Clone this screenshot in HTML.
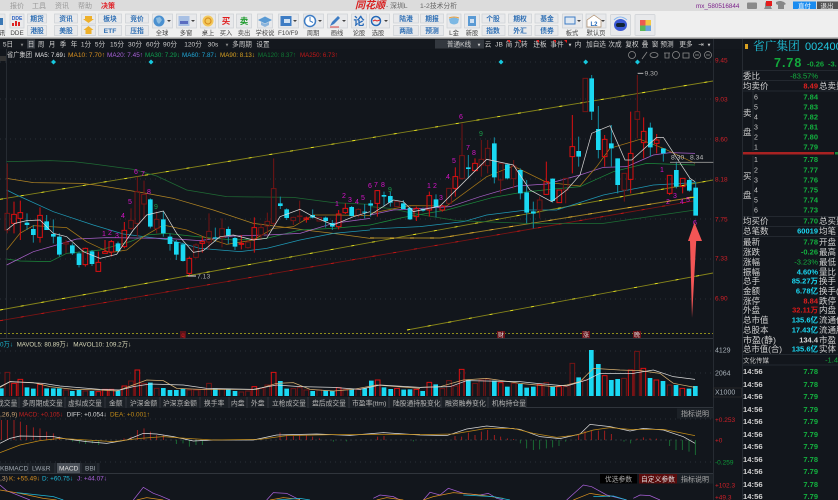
<!DOCTYPE html>
<html lang="zh"><head><meta charset="utf-8"><title>K</title>
<style>
html,body{margin:0;padding:0;background:#12161c;width:838px;height:500px;overflow:hidden}
svg{display:block;font-family:"Liberation Sans","Noto Sans CJK SC",sans-serif;filter:blur(.35px)}
.m{font-size:7px;fill:#999}
.b{font-size:6.8px;fill:#2f6fb4;text-anchor:middle;font-weight:bold}
.l{font-size:6.3px;fill:#444;text-anchor:middle}
.t{font-size:6.6px;fill:#d0d0d0;text-anchor:middle}
.a{font-size:6.5px;fill:#d02028}
.k{font-size:8.5px;fill:#d0d0d0}
.g{fill:#13b13f;font-size:7.5px;text-anchor:end;font-weight:bold}
.c{fill:#1ad8f2;font-size:7.5px;text-anchor:end;font-weight:bold}
.q{font-size:7px;fill:#c8c8c8}
.n{font-size:7px;fill:#d414c8;text-anchor:middle}
.bt{fill:#e8e9eb;stroke:#ccd0d4;stroke-width:.7}
.v{font-size:6.8px;fill:#b4b4b4}
</style></head>
<body>
<svg width="838" height="500" viewBox="0 0 838 500" xmlns="http://www.w3.org/2000/svg">
<rect width="838" height="500" fill="#12161c"/>
<!-- title bar -->
<rect width="838" height="11" fill="#dcdcdc"/>
<rect y="11" width="838" height="27" fill="#efefef"/>
<rect y="37.5" width="838" height="1.5" fill="#8a8a8a"/>
<g class="m"><text x="10" y="8">报价</text><text x="32" y="8">工具</text><text x="55" y="8">资讯</text><text x="78" y="8">帮助</text></g>
<text x="101" y="8" font-size="7" fill="#e0242a" font-weight="bold">决策</text>
<text x="355" y="8.500" font-size="10" fill="#d81e1e" font-weight="bold" font-style="italic">同花顺</text>
<text x="386" y="8" font-size="6.800" fill="#666">- 深圳L</text>
<text x="420" y="8" font-size="6.800" fill="#666">1-2技术分析</text>
<text x="696" y="8" font-size="6.300" fill="#7a1f8a">mx_580516844</text>
<rect x="747" y="2.500" width="10" height="6.500" rx="1" fill="#8a8a8a"/>
<path d="M764 9h8l-1-2v-3a3 3 0 0 0-6 0v3z" fill="#8a8a8a"/><rect x="766" y="1" width="6" height="5" fill="#e51b1b"/>
<path d="M776 2l3-1h2l3 1 2 2-2 1v4h-6V5l-2-1z" fill="#888"/>
<rect x="793" y="1.500" width="23" height="7.500" fill="#1a8cf0"/><text x="804.500" y="8" font-size="6.500" fill="#fff" text-anchor="middle">直付</text>
<rect x="817" y="1.500" width="21" height="7.500" fill="#555"/><text x="827" y="8" font-size="6.500" fill="#eee" text-anchor="middle">退出</text>
<!-- toolbar -->
<rect x="-4" y="14" width="9" height="19" fill="#e8e9eb" stroke="#ccd0d4" stroke-width=".6"/>
<rect x="-2" y="18" width="5" height="7" fill="#3a78b5"/><text x="2" y="35" class="l">讯</text>
<rect x="10" y="14" width="14" height="14" class="bt"/>
<text x="17" y="20" font-size="5" fill="#2a5fc0" text-anchor="middle" font-weight="bold">DDE</text>
<path d="M12 26v-3h2v3zM15 26v-5h2v5zM18 26v-4h2v4z" fill="#d22"/>
<text x="17" y="35" class="l">DDE</text>
<rect x="27.500" y="14" width="19" height="9" class="bt"/><text x="37" y="21" class="b">期货</text>
<rect x="27.500" y="25.500" width="19" height="10" class="bt"/><text x="37" y="33" class="b">港股</text>
<rect x="54.500" y="14" width="23" height="9" class="bt"/><text x="66" y="21" class="b">资讯</text>
<rect x="54.500" y="25.500" width="23" height="10" class="bt"/><text x="66" y="33" class="b">美股</text>
<rect x="81.500" y="14" width="14" height="10" class="bt"/><path d="M85 16h7v3h2l-5.500 4-5.500-4h2z" fill="#eeb02a"/>
<rect x="81.500" y="25.500" width="14" height="10" class="bt"/><path d="M88.500 26l5 4h-2v4h-6v-4h-2z" fill="#eeb02a"/>
<rect x="98.500" y="14" width="23" height="9" class="bt"/><text x="110" y="21" class="b">板块</text>
<rect x="98.500" y="25.500" width="23" height="10" class="bt"/><text x="110" y="33" class="b">ETF</text>
<rect x="125.500" y="14" width="23" height="9" class="bt"/><text x="137" y="21" class="b">竞价</text>
<rect x="125.500" y="25.500" width="23" height="10" class="bt"/><text x="137" y="33" class="b">压指</text>
<rect x="152.500" y="14" width="20" height="14" class="bt"/><circle cx="159" cy="21" r="5.500" fill="#4a90d0"/><path d="M156 18l4-1 2 3-3 4-2-2z" fill="#8dbce0"/><path d="M167 20h4l-2 2z" fill="#444"/><text x="162" y="35" class="l">全球</text>
<rect x="176.500" y="14" width="20" height="14" class="bt"/><rect x="178.500" y="16" width="11" height="10" fill="#a8c0e4"/><rect x="180" y="21" width="8" height="3" fill="#5a6cc0"/><path d="M191 20h4l-2 2z" fill="#444"/><text x="186" y="35" class="l">多窗</text>
<rect x="200.500" y="14" width="15" height="14" class="bt"/><circle cx="208" cy="21" r="5.500" fill="#f2c85c"/><circle cx="208" cy="21" r="3" fill="none" stroke="#d89020" stroke-width="1.200"/><text x="208" y="35" class="l">桌上</text>
<rect x="218.500" y="14" width="15" height="14" class="bt"/><text x="226" y="24" font-size="8.500" fill="#e01c1c" text-anchor="middle" font-weight="bold">买</text><text x="226" y="35" class="l">买入</text>
<rect x="236.500" y="14" width="15" height="14" class="bt"/><text x="244" y="24" font-size="8.500" fill="#1a9a2a" text-anchor="middle" font-weight="bold">卖</text><text x="244" y="35" class="l">卖出</text>
<rect x="257.500" y="14" width="15" height="14" class="bt"/><path d="M258 20l7-3.500 7 3.500-7 3.500z" fill="#5a9ad4"/><path d="M261 22v3l4 2 4-2v-3l-4 2z" fill="#8ab4dc"/><text x="265" y="35" class="l">学校说</text>
<rect x="278.500" y="14" width="20" height="14" class="bt"/><rect x="280.500" y="16" width="11" height="10" fill="#3d7cc4"/><rect x="284" y="19" width="6" height="4" fill="#cfe0f2"/><path d="M293 20h4l-2 2z" fill="#444"/><text x="288" y="35" class="l">F10/F9</text>
<rect x="303.500" y="14" width="20" height="14" class="bt"/><circle cx="310" cy="21" r="5.500" fill="#fff" stroke="#3d7cc4" stroke-width="1.500"/><path d="M310 17v4l3 1.500" stroke="#3d7cc4" fill="none"/><path d="M318 20h4l-2 2z" fill="#444"/><text x="313" y="35" class="l">周期</text>
<rect x="327.500" y="14" width="20" height="14" class="bt"/><path d="M330 26l2-4 6-6 2 2-6 6z" fill="#3d7cc4"/><path d="M330 27h9" stroke="#d44"/><path d="M342 20h4l-2 2z" fill="#444"/><text x="337" y="35" class="l">画线</text>
<rect x="351.500" y="14" width="15" height="14" class="bt"/><text x="359" y="25" font-size="11" fill="#2468b8" text-anchor="middle" font-weight="bold">论</text><text x="359" y="35" class="l">论股</text>
<rect x="369.500" y="14" width="20" height="14" class="bt"/><circle cx="376" cy="21" r="4.500" fill="none" stroke="#2468b8" stroke-width="1.500"/><path d="M373 21l2-1 2 1 3-1" stroke="#d22" fill="none"/><path d="M384 20h4l-2 2z" fill="#444"/><text x="378" y="35" class="l">选股</text>
<rect x="393.500" y="14" width="25" height="9" class="bt"/><text x="406" y="21" class="b">陆港</text>
<rect x="393.500" y="25.500" width="25" height="10" class="bt"/><text x="406" y="33" class="b">两融</text>
<rect x="420.500" y="14" width="23" height="9" class="bt"/><text x="432" y="21" class="b">期报</text>
<rect x="420.500" y="25.500" width="23" height="10" class="bt"/><text x="432" y="33" class="b">预测</text>
<rect x="447" y="14" width="14" height="14" class="bt"/><path d="M449 19q5-3 10 0l-1 4q-4 3-8 0z" fill="#7cb8e4"/><path d="M449 18q5-2 10 0" stroke="#e8a040" fill="none"/><text x="454" y="35" class="l">L金</text>
<rect x="464.500" y="14" width="15" height="14" class="bt"/><rect x="468" y="16" width="8" height="10" fill="#5a9ad4"/><rect x="470" y="19" width="4" height="4" fill="#cfe0f2"/><text x="472" y="35" class="l">新股</text>
<rect x="482" y="14" width="23" height="9" class="bt"/><text x="493" y="21" class="b">个股</text>
<rect x="482" y="25.500" width="23" height="10" class="bt"/><text x="493" y="33" class="b">指数</text>
<rect x="508.500" y="14" width="23" height="9" class="bt"/><text x="520" y="21" class="b">期权</text>
<rect x="508.500" y="25.500" width="23" height="10" class="bt"/><text x="520" y="33" class="b">外汇</text>
<rect x="535" y="14" width="23" height="9" class="bt"/><text x="547" y="21" class="b">基金</text>
<rect x="535" y="25.500" width="23" height="10" class="bt"/><text x="547" y="33" class="b">债券</text>
<rect x="562.500" y="14" width="20" height="14" class="bt"/><rect x="565" y="17" width="10" height="7" fill="#dfe8f2" stroke="#3d7cc4"/><path d="M577 20h4l-2 2z" fill="#444"/><text x="572" y="35" class="l">板式</text>
<rect x="586" y="14" width="20" height="14" class="bt"/><path d="M587 20l7-5 7 5v7h-14z" fill="#fff" stroke="#a86" stroke-width=".7"/><text x="594" y="26" font-size="6" fill="#2468b8" text-anchor="middle" font-weight="bold">L2</text><path d="M601 20h4l-2 2z" fill="#444"/><text x="596" y="35" class="l">默认页</text>
<rect x="610.500" y="14.500" width="20" height="21" rx="1" class="bt"/><ellipse cx="620.500" cy="25" rx="6.500" ry="6" fill="#3d5ad4"/><rect x="616" y="23" width="9" height="4" rx="2" fill="#123"/><path d="M614 20q6-6 13 0" stroke="#88b8f0" fill="none"/>
<rect x="635" y="14.500" width="20" height="21" rx="1" class="bt"/><rect x="640" y="20" width="5.500" height="5.500" fill="#ee5a52"/><rect x="645.500" y="20" width="5.500" height="5.500" fill="#f4c844"/><rect x="640" y="25.500" width="5.500" height="5.500" fill="#5cb858"/><rect x="645.500" y="25.500" width="5.500" height="5.500" fill="#6aa4dc"/>
<!-- tab strip -->
<rect y="39" width="742" height="10" fill="#14181e"/>
<rect x="27" y="39.500" width="8" height="9" fill="#3a3f46"/>
<rect x="435" y="39.500" width="49" height="9" fill="#33383f"/>
<g class="t">
<text x="8" y="46.500">5日</text><text x="22" y="46.500" font-size="5.500" fill="#888">▾</text><text x="31" y="46.500">日</text><text x="41" y="46.500">周</text><text x="52" y="46.500">月</text><text x="63" y="46.500">季</text><text x="74" y="46.500">年</text><text x="86" y="46.500">1分</text><text x="100" y="46.500">5分</text><text x="117" y="46.500">15分</text><text x="135" y="46.500">30分</text><text x="153" y="46.500">60分</text><text x="170" y="46.500">90分</text><text x="193" y="46.500">120分</text><text x="213" y="46.500">30s</text><text x="227" y="46.500" font-size="5.500" fill="#888">▾</text><text x="242" y="46.500">多周期</text><text x="263" y="46.500">设置</text>
<text x="459" y="46.500">普通K线</text><text x="479" y="46.500" font-size="5.500">▾</text><text x="488" y="46.500">云</text><text x="499" y="46.500">JB</text><text x="509" y="46.500">简</text><text x="521" y="46.500">九转</text><text x="540" y="46.500">连板</text><text x="557" y="46.500">事件</text><text x="570" y="46.500" font-size="5.500">▾</text><text x="578" y="46.500">内</text><text x="596" y="46.500">加自选</text><text x="615" y="46.500">次成</text><text x="632" y="46.500">复权</text><text x="645" y="46.500">叠</text><text x="655" y="46.500">窗</text><text x="667" y="46.500">预测</text><text x="686" y="46.500">更多</text><text x="701" y="46.500">⇥</text><text x="709" y="46.500" font-size="5.500">▾</text>
</g>
<path d="M507 40l3 0v3zM518 40l3 0v3zM536 40l3 0v3zM553 40l3 0v3zM564 40l3 0v3z" fill="#e02020"/>
<!-- MA legend -->
<g font-size="6.800" lengthAdjust="spacingAndGlyphs">
<text x="7" y="57" fill="#d0d0d0" textLength="25" lengthAdjust="spacingAndGlyphs">省广集团</text>
<text x="35" y="57" fill="#e8e8e8" textLength="31" lengthAdjust="spacingAndGlyphs">MA5: 7.69↓</text>
<text x="68" y="57" fill="#d89020" textLength="37" lengthAdjust="spacingAndGlyphs">MA10: 7.70↑</text>
<text x="107" y="57" fill="#a860d8" textLength="36" lengthAdjust="spacingAndGlyphs">MA20: 7.45↑</text>
<text x="145" y="57" fill="#0fa050" textLength="35" lengthAdjust="spacingAndGlyphs">MA30: 7.29↓</text>
<text x="182" y="57" fill="#20a8d8" textLength="35" lengthAdjust="spacingAndGlyphs">MA60: 7.87↓</text>
<text x="220" y="57" fill="#d8a020" textLength="35" lengthAdjust="spacingAndGlyphs">MA90: 8.13↓</text>
<text x="258" y="57" fill="#0f7a34" textLength="38" lengthAdjust="spacingAndGlyphs">MA120: 8.37↑</text>
<text x="300" y="57" fill="#c01818" textLength="38" lengthAdjust="spacingAndGlyphs">MA250: 6.73↑</text>
</g>
<rect x="0" y="56" width="6" height="5" fill="#333"/>
<!-- icons row -->
<g fill="none" stroke="#8c8c8c" stroke-width=".8">
<circle cx="632" cy="55" r="3.500"/><path d="M642 59l5-7"/><ellipse cx="654" cy="55" rx="4" ry="2.500"/><path d="M664 53h6M665 53v5h4v-5"/><circle cx="676" cy="55" r="3.500"/><rect x="683" y="53" width="6" height="5"/><circle cx="697" cy="55" r="3.500"/><path d="M695 55h4"/><circle cx="708" cy="55" r="3.500"/><path d="M706 55h4"/>
</g>
<!-- structure lines -->
<path d="M6.500 49V338M713.500 39V500M742.500 39V500" stroke="#262b32" stroke-width="1" fill="none"/>
<path d="M0 338.500H713M0 407.500H713M0 473.500H713" stroke="#30353c" stroke-width="1" fill="none"/>
<path d="M0 62H713M0 99H713M0 139H713M0 179H713M0 219H713M0 259H713M0 299H713M0 351H713M0 373H713M0 419H713M0 462H713" stroke="#343a42" stroke-width=".8" stroke-dasharray="1 4" fill="none"/>
<path d="M0 333.500H713" stroke="#b8b41c" stroke-width=".8" stroke-dasharray="2 2" fill="none"/>
<path d="M0 440H695" stroke="#3a4048" stroke-width=".8" stroke-dasharray="2 3" fill="none"/>
<!-- axis -->
<g class="a">
<text x="715" y="62.500">9.45</text><text x="715" y="101.500">9.03</text><text x="715" y="141.500">8.60</text><text x="715" y="181.500">8.18</text><text x="715" y="221.500">7.75</text><text x="715" y="260.500">7.33</text><text x="715" y="300.500">6.90</text>
<text x="715" y="422">+0.253</text><text x="715" y="442.500">+0</text><text x="715" y="487.500">+102.3</text><text x="715" y="499.500">+49.3</text>
</g>
<text x="715" y="464.500" font-size="6.500" fill="#0d9a38">-0.259</text>
<g font-size="7" fill="#a8b0b8"><text x="715" y="352.500">4129</text><text x="715" y="375.500">2064</text><text x="715" y="394.500">X1000</text></g>
<rect x="713.500" y="388" width="28" height="9" fill="none" stroke="#333" stroke-width=".6"/>
<!-- diamonds -->
<g fill="#16c8de"><path d="M53.500 59.500l2.500 2.500-2.500 2.500-2.500-2.500z"/><path d="M151 59.500l2.500 2.500-2.500 2.500-2.500-2.500z"/><path d="M501 59.500l2.500 2.500-2.500 2.500-2.500-2.500z"/><path d="M585.700 59.500l2.500 2.500-2.500 2.500-2.500-2.500z"/><path d="M637.500 59.500l2.500 2.500-2.500 2.500-2.500-2.500z"/></g>
<!-- channel lines -->
<g fill="none" stroke-width=".9">
<path d="M0 199.300L713 81M0 310L713 180M407 330L713 273" stroke="#86841a"/>
<path d="M0 199.300L713 81M0 310L713 180M407 330L713 273" stroke="#eeea20" stroke-dasharray="3 18"/>
<path d="M0 320.700L695 200.700" stroke="#7a1414"/>
<path d="M0 320.700L695 200.700" stroke="#cc1616" stroke-dasharray="3 18"/>
<path d="M370 238L440 238L695 197" stroke="#a08024"/>
<path d="M370 238L440 238L695 197" stroke="#eeb830" stroke-dasharray="4 16"/>
</g>
<!-- left half chart: zoom space -->
<g transform="translate(0 60) scale(.33333)" fill="none">
<polyline stroke-width="2.200" stroke="#1f6a34" points="20,305 150,302 220,305 280,312 400,328 470,348 560,390 680,410 880,412 1000,428 1110,433"/>
<polyline stroke-width="2.200" stroke="#b08424" points="20,355 100,368 245,370 300,377 440,400 520,415 640,450 760,490 880,505 930,512 1000,520 1110,535"/>
<polyline stroke-width="2.200" stroke="#1f98b4" points="20,390 50,405 160,455 280,495 370,522 510,540 600,565 720,575 800,565 900,540 1000,520 1110,510"/>
<polyline stroke-width="2.200" stroke="#1c8a3c" points="20,597 60,603 150,605 200,580 300,570 390,545 440,525 500,520 590,530 700,540 800,535 900,510 1000,505 1110,495"/>
<polyline stroke-width="2.200" stroke="#a860c8" points="20,615 100,575 180,552 230,537 320,533 500,535 600,542 700,528 800,525 900,520 1000,490 1110,475"/>
<polyline stroke-width="2.200" stroke="#a87818" points="20,570 60,520 100,497 200,503 260,545 330,578 380,570 430,530 490,495 560,510 610,530 680,553 760,540 820,505 880,500 940,465 1000,465 1110,467"/>
<path stroke-width="3" stroke="#dd1010" d="M42 425V463M42 490V520M35 463h14v27h-14zM61 422V458M61 475V540M54 458h14v17h-14zM120 442V466M120 532V548M113 466h14v66h-14zM256 563V565M256 614V620M249 565h14v49h-14zM295 575V607M288 607h14v27h-14zM315 540V575M308 575h14v5h-14zM334 540V545M334 576V590M327 545h14v31h-14zM373 486V511M373 560V565M366 511h14v49h-14zM568 590V595M568 640V650M561 595h14v45h-14zM607 530V545M607 550V578M600 545h14v5h-14zM724 525V550M724 553V568M717 550h14v3h-14zM763 472V503M763 538V578M756 503h14v35h-14zM919 470V474M919 478V488M912 474h14v4h-14zM1016 450V462M1016 500V508M1009 462h14v38h-14zM1036 430V445M1036 458V462M1029 445h14v13h-14z"/>
<path stroke-width="3" stroke="#741414" d="M22 310V460M22 510V520M15 460h14v50h-14zM198 540V548M198 552V580M191 548h14v4h-14zM393 445V481M393 505V510M386 481h14v24h-14zM412 350V395M412 490V530M405 395h14v95h-14zM432 362V403M432 432V478M425 403h14v29h-14zM470 455V478M470 505V520M463 478h14v27h-14zM588 550V555M588 592V595M581 555h14v37h-14zM627 460V514M627 546V570M620 514h14v32h-14zM666 475V506M666 532V562M659 506h14v26h-14zM744 540V546M744 563V566M737 546h14v17h-14zM783 490V503M783 525V540M776 503h14v22h-14zM802 458V484M802 498V525M795 484h14v14h-14zM821 295V386M821 490V500M814 386h14v104h-14zM880 470V472M880 482V495M873 472h14v10h-14zM899 422V468M899 470V490M892 468h14v2h-14zM951 472h14v11h-14zM1075 445V448M1075 466V472M1068 448h14v18h-14z"/>
<path stroke-width="3" stroke="#128ca2" d="M81 460V510M100 495V548M140 465V510M160 478V550M178 520V590M217 550V585M237 575V622M276 570V618M354 545V578M451 415V505M490 455V530M510 520V572M529 540V600M549 548V605M646 503V545M685 500V552M705 530V570M841 410V447M860 445V480M938 448V475M977 470V503M997 480V510M1055 438V470M1094 432V475"/>
<path fill="#1ad8f2" d="M74 488h14v7h-14zM93 507h14v18h-14zM133 484h14v26h-14zM153 522h14v8h-14zM171 530h14v54h-14zM210 556h14v24h-14zM230 580h14v35h-14zM269 574h14v38h-14zM347 550h14v23h-14zM444 418h14v82h-14zM483 478h14v42h-14zM503 530h14v22h-14zM522 546h14v38h-14zM542 553h14v50h-14zM639 532h14v3h-14zM678 507h14v19h-14zM698 534h14v26h-14zM834 430h14v8h-14zM853 448h14v26h-14zM931 465h14v8h-14zM970 473h14v10h-14zM990 489h14v11h-14zM1048 441h14v27h-14zM1087 455h14v3h-14z"/>
<polyline stroke-width="2.200" stroke="#dcdcdc" points="20,510 45,490 80,482 120,480 160,520 200,530 250,575 300,595 350,583 400,510 440,465 490,453 530,520 580,577 610,572 660,530 700,525 760,540 800,535 840,470 900,448 940,470 1000,495 1060,470 1110,455"/>
<path d="M563 648h25" stroke="#ddd" stroke-width="3"/>
</g>
<text x="197" y="278.500" font-size="6.800" fill="#a8a8a8">7.13</text>
<!-- right half chart -->
<g transform="translate(370 60) scale(.33333)" fill="none">
<polyline stroke-width="2.200" stroke="#1c6e34" points="0,440 60,445 130,460 260,482 470,490 700,490 975,450"/>
<polyline stroke-width="2.200" stroke="#1f98b4" points="0,507 150,500 280,485 350,465 470,450 560,450 700,405 850,375 975,368"/>
<polyline stroke-width="2.200" stroke="#1c8a3c" points="0,495 100,472 230,450 370,412 450,398 540,388 630,380 730,335 830,310 975,315"/>
<polyline stroke-width="2.200" stroke="#a860c8" points="0,465 70,450 130,447 240,440 330,410 440,378 530,372 630,345 700,322 770,320 850,285 900,278 975,280"/>
<polyline stroke-width="2.200" stroke="#a87818" points="0,460 120,437 230,438 350,350 430,318 530,367 630,378 680,320 720,265 810,238 880,265 975,310"/>
<path stroke-width="3" stroke="#dd1010" d="M22 390V392M22 430V470M15 392h14v38h-14zM139 440V445M139 470V483M132 445h14v25h-14zM178 395V407M178 450V470M171 407h14v43h-14zM217 435V438M217 450V455M210 438h14v12h-14zM256 322V350M256 385V410M249 350h14v35h-14zM315 295V310M315 332V335M308 310h14v22h-14zM529 305V365M529 403V405M522 365h14v38h-14zM561 390h14v38h-14zM607 165V260M607 290V340M600 260h14v30h-14zM704 225V238M704 290V320M697 238h14v52h-14zM782 155V280M782 358V400M775 280h14v78h-14zM821 172V214M821 248V295M814 214h14v34h-14zM860 222V240M860 250V280M853 240h14v10h-14zM899 345V346M899 400V405M892 346h14v54h-14zM938 380V400M931 355h14v25h-14z"/>
<path stroke-width="3" stroke="#741414" d="M74 425h14v15h-14zM230 385h14v45h-14zM276 190V287M276 355V360M269 287h14v68h-14zM334 240V298M334 315V350M327 298h14v17h-14zM353 240V265M353 317V340M346 265h14v52h-14zM392 360V400M385 310h14v50h-14zM431 300V318M431 356V385M424 318h14v38h-14zM509 410V420M509 450V475M502 420h14v30h-14zM587 390V430M580 355h14v35h-14zM639 55h14v100h-14zM763 390V425M756 340h14v50h-14zM802 45V155M802 178V235M795 155h14v23h-14z"/>
<path stroke-width="3" stroke="#128ca2" d="M2 420V470M42 395V440M61 395V440M100 420V450M120 440V480M159 443V455M198 403V472M295 285V355M373 232V370M412 310V358M451 325V418M470 360V490M490 425V505M548 355V428M626 230V320M665 45V180M685 138V295M724 195V320M743 295V400M841 188V290M880 265V305M919 305V385M958 355V395M977 365V383"/>
<path fill="#1ad8f2" d="M-5 430h14v7h-14zM35 405h14v5h-14zM54 408h14v20h-14zM93 430h14v17h-14zM113 444h14v34h-14zM152 447h14v5h-14zM191 418h14v23h-14zM288 322h14v5h-14zM366 250h14v102h-14zM405 313h14v42h-14zM444 330h14v70h-14zM463 397h14v61h-14zM483 454h14v7h-14zM541 356h14v67h-14zM619 273h14v17h-14zM658 55h14v100h-14zM678 207h14v63h-14zM717 250h14v15h-14zM736 295h14v80h-14zM834 203h14v59h-14zM873 265h14v15h-14zM912 330h14v50h-14zM951 360h14v32h-14zM970 383h14v84h-14z"/>
<polyline stroke-width="2.200" stroke="#d4d4d4" points="0,465 70,420 100,425 130,455 210,438 350,298 430,315 480,390 545,425 590,390 630,345 665,220 720,197 765,300 785,300 860,232 880,232 960,355 975,365"/>
<path d="M803 40h17" stroke="#bbb" stroke-width="3"/>
<path d="M900 307H1030" stroke="#888" stroke-width="3"/>
<path d="M973 412h-14" stroke="#d8c818" stroke-width="3"/>
</g>
<text x="644.500" y="75.500" font-size="6.800" fill="#b0b0b0">9.30</text>
<text x="671" y="159.500" font-size="6.800" fill="#c0c0c0">8.30</text><text x="690" y="159.500" font-size="6.800" fill="#c0c0c0">8.34</text>
<!-- TD numbers -->
<g class="n">
<text x="104" y="236">1</text><text x="110" y="235">2</text><text x="117" y="238">3</text><text x="123" y="218">4</text><text x="130" y="204">5</text><text x="136" y="174">6</text><text x="143" y="176">7</text><text x="149" y="194">8</text><text x="156" y="209" style="fill:#1a9a48">9</text>
<text x="337" y="206">1</text><text x="344" y="198">2</text><text x="350" y="202">3</text><text x="357" y="204">4</text><text x="363" y="200">5</text><text x="370" y="188">6</text>
<text x="376" y="187">7</text><text x="383" y="187">8</text><text x="390" y="192" style="fill:#1a9a48">9</text>
<text x="429" y="188">1</text><text x="435" y="188">2</text><text x="441" y="200">3</text><text x="448" y="179">4</text><text x="454" y="163">5</text><text x="461" y="119">6</text><text x="468" y="150">7</text><text x="474" y="155">8</text><text x="481" y="136" style="fill:#1a9a48">9</text>
<text x="662" y="172">1</text><text x="668" y="204">2</text><text x="675" y="198">3</text><text x="682" y="204">4</text><text x="688" y="202">5</text><text x="695" y="225">6</text>
</g>
<!-- arrow -->
<path d="M694.500 222.500L702 241H696.200L692 318L690 241H688z" fill="#f25555"/>
<!-- markers -->
<rect x="180" y="331" width="6" height="7" fill="#5a1218"/><text x="183" y="337" font-size="6" fill="#e02020" text-anchor="middle">q</text>
<rect x="497" y="331" width="8" height="7" fill="#6a1218"/><text x="501" y="337.200" font-size="6" fill="#ddd" text-anchor="middle">财</text>
<rect x="582" y="331" width="8" height="7" fill="#6a1218"/><text x="586" y="337.200" font-size="6" fill="#ddd" text-anchor="middle">涨</text>
<rect x="633" y="331" width="8" height="7" fill="#6a1218"/><text x="637" y="337.200" font-size="6" fill="#ddd" text-anchor="middle">晚</text>
<!-- volume legend -->
<text x="0" y="346.500" font-size="6.800" fill="#1ab0c8" textLength="13" lengthAdjust="spacingAndGlyphs">0万↓</text>
<text x="16.700" y="346.500" font-size="6.800" fill="#d8d8b8" textLength="52" lengthAdjust="spacingAndGlyphs">MAVOL5: 80.89万↓</text>
<text x="73.300" y="346.500" font-size="6.800" fill="#d8d8b8" textLength="58" lengthAdjust="spacingAndGlyphs">MAVOL10: 109.2万↓</text>
<!-- volume bars -->
<g transform="translate(0 330) scale(.33333)" fill="none">
<path fill="#1ad8f2" d="M-3 175h14v23h-14zM74 172h14v26h-14zM93 176h14v22h-14zM133 175h14v23h-14zM153 175h14v23h-14zM171 175h14v23h-14zM210 183h14v15h-14zM230 180h14v18h-14zM269 183h14v15h-14zM347 182h14v16h-14zM444 158h14v40h-14zM483 174h14v24h-14zM503 180h14v18h-14zM522 180h14v18h-14zM542 177h14v21h-14zM639 175h14v23h-14zM678 178h14v20h-14zM698 183h14v15h-14zM834 153h14v45h-14zM853 176h14v22h-14zM931 183h14v15h-14zM970 182h14v16h-14zM990 183h14v15h-14zM1048 178h14v20h-14zM1087 175h14v23h-14zM1107 152h14v46h-14zM1145 172h14v26h-14zM1165 177h14v21h-14zM1204 179h14v19h-14zM1223 178h14v20h-14z"/>
<path stroke="#dd1010" stroke-width="3" d="M35 198V160h14v38M54 198V148h14v50M113 198V163h14v35M288 198V185h14v13M308 198V178h14v20M327 198V178h14v20M366 198V168h14v30M405 198V120h14v78M756 198V170h14v28M814 198V127h14v71M1009 198V173h14v25M1126 198V150h14v48M1184 198V175h14v23M1242 198V178h14v20"/>
<path stroke="#741414" stroke-width="3" d="M15 198V127h14v71M191 198V180h14v18M249 198V183h14v15M386 198V153h14v45M425 198V160h14v38M463 198V175h14v23M561 198V180h14v18M581 198V180h14v18M600 198V178h14v20M620 198V160h14v38M659 198V177h14v21M717 198V186h14v12M737 198V183h14v15M776 198V175h14v23M795 198V165h14v33M873 198V176h14v22M892 198V173h14v25M912 198V180h14v18M951 198V180h14v18M1029 198V178h14v20M1068 198V178h14v20"/>
<polyline stroke="#d8b070" stroke-width="2.200" points="0,172 30,155 100,158 150,170 220,178 300,180 350,183 400,165 440,150 490,152 530,175 600,178 700,178 770,178 830,160 880,158 930,178 1000,183 1060,178 1130,165 1260,175"/>
<polyline stroke="#d8d8d8" stroke-width="2.200" points="0,170 30,155 130,160 180,168 300,178 360,180 400,170 450,162 550,165 620,175 760,178 830,165 900,170 1000,172 1080,178 1140,165 1260,172"/>
</g>
<g transform="translate(420 330) scale(.33333)" fill="none">
<path fill="#1ad8f2" d="M1 183h14v15h-14zM40 163h14v35h-14zM138 150h14v48h-14zM216 152h14v46h-14zM255 170h14v28h-14zM294 162h14v36h-14zM313 173h14v25h-14zM333 170h14v28h-14zM391 170h14v28h-14zM469 142h14v56h-14zM507 60h14v138h-14zM528 102h14v96h-14zM567 150h14v48h-14zM586 147h14v51h-14zM683 144h14v54h-14zM722 153h14v45h-14zM761 165h14v33h-14zM800 176h14v22h-14zM819 168h14v30h-14z"/>
<path stroke="#dd1010" stroke-width="3" d="M21 198V157h14v41M118 198V118h14v80M235 198V158h14v40M352 198V163h14v35M410 198V170h14v28M547 198V137h14v61M625 198V120h14v78M663 198V115h14v83M702 198V150h14v48M780 198V175h14v23"/>
<path stroke="#741414" stroke-width="3" d="M60 198V176h14v22M80 198V152h14v46M99 198V168h14v30M158 198V160h14v38M177 198V150h14v48M196 198V147h14v51M274 198V160h14v38M372 198V158h14v40M430 198V170h14v28M450 198V100h14v98M488 198V150h14v48M605 198V145h14v53M644 198V64h14v134M742 198V165h14v33"/>
<polyline stroke="#d8b070" stroke-width="2.200" points="0,172 60,170 130,150 200,145 300,160 400,170 440,165 480,155 520,115 600,120 660,122 720,130 760,160 825,172"/>
<polyline stroke="#d8d8d8" stroke-width="2.200" points="0,172 90,170 140,152 300,155 350,160 440,168 500,150 540,130 640,130 700,120 760,140 825,148"/>
</g>
<!-- volume tabs -->
<rect y="397" width="526" height="11" fill="#1b2026"/>
<path d="M19 397v11M65 397v11M105 397v11M126 397v11M160 397v11M200 397v11M229 397v11M247 397v11M268 397v11M308 397v11M349 397v11M389 397v11M441 397v11M488 397v11M526 397v11" stroke="#3a3f46" stroke-width=".7"/>
<g class="v">
<text x="-3" y="405.300">成交量</text><text x="22" y="405.300">多周期成交量</text><text x="68" y="405.300">虚拟成交量</text><text x="109" y="405.300">金额</text><text x="130" y="405.300">沪深金额</text><text x="163" y="405.300">沪深京金额</text><text x="204" y="405.300">换手率</text><text x="231" y="405.300">内盘</text><text x="251" y="405.300">外盘</text><text x="272" y="405.300">立枪成交量</text><text x="312" y="405.300">盘后成交量</text><text x="352" y="405.300">市盈率(ttm)</text><text x="393" y="405.300">陆股通持股变化</text><text x="445" y="405.300">融资融券变化</text><text x="492" y="405.300">机构持仓量</text>
</g>
<!-- MACD legend -->
<text x="0" y="416.500" font-size="6.800" fill="#c8a070">,26,9)</text>
<text x="19" y="416.500" font-size="6.800" fill="#c02020" textLength="44" lengthAdjust="spacingAndGlyphs">MACD: +0.105↓</text>
<text x="66.700" y="416.500" font-size="6.800" fill="#d8d8d8" textLength="40" lengthAdjust="spacingAndGlyphs">DIFF: +0.054↓</text>
<text x="110" y="416.500" font-size="6.800" fill="#c08a18" textLength="40" lengthAdjust="spacingAndGlyphs">DEA: +0.001↑</text>
<rect x="677" y="408.500" width="36" height="10" fill="#1c2127"/><text x="695" y="416" font-size="7" fill="#a8a8a8" text-anchor="middle">指标说明</text>
<!-- MACD -->
<g transform="translate(0 330) scale(.33333)" fill="none" stroke-width="2.500">
<path stroke="#b82020" d="M4 330V270M22 330V270M42 330V270M61 330V275M80 330V285M100 330V292M120 330V295M140 330V305M160 330V310M178 330V320M372 330V325M393 330V320M412 330V300M432 330V295M451 330V305M470 330V315M490 330V315M840 330V308M860 330V315M880 330V318M899 330V315M919 330V316M938 330V320M958 330V325M1133 330V320M1152 330V318"/>
<path stroke="#1a7a38" d="M218 330V335M238 330V340M257 330V342M277 330V340M296 330V345M529 330V342M549 330V340M568 330V350M588 330V345M607 330V345M1000 330V335M1040 330V334M1240 330V334"/>
<polyline stroke="#e0e0e0" stroke-width="2.200" points="0,340 30,325 60,318 160,320 200,327 260,335 320,340 380,330 430,310 470,312 520,320 580,333 640,330 760,330 830,315 950,312 1050,316 1150,308 1260,315"/>
<polyline stroke="#c08a18" stroke-width="2.200" points="0,368 60,345 120,332 180,325 260,330 340,335 420,325 490,320 560,325 640,330 780,328 860,317 1000,314 1260,313"/>
</g>
<g transform="translate(420 330) scale(.33333)" fill="none" stroke-width="2.500">
<path stroke="#b82020" d="M105 330V318M125 330V320M145 330V308M165 330V315M184 330V305M203 330V300M223 330V315M242 330V320M262 330V325M281 330V327M476 330V315M495 330V303M514 330V302M535 330V302M554 330V302M574 330V312M651 330V326M670 330V322M690 330V325M709 330V326"/>
<path stroke="#1a7a38" d="M301 330V340M320 330V355M340 330V360M359 330V358M379 330V355M398 330V352M417 330V348M437 330V335M612 330V335M632 330V340M749 330V348M768 330V360M787 330V360M807 330V365M826 330V375"/>
<polyline stroke="#d8d8d8" stroke-width="2.200" points="0,315 80,317 140,297 200,288 300,298 360,320 420,326 480,312 510,283 570,290 630,303 670,295 730,300 790,320 825,340"/>
<polyline stroke="#c08a18" stroke-width="2.200" points="0,314 100,312 200,295 280,295 340,310 410,322 470,315 520,300 570,293 630,298 730,298 825,317"/>
</g>
<!-- lower tabs -->
<rect y="463" width="100" height="10" fill="#1b2026"/><rect x="57" y="463" width="23" height="10" fill="#4a5058"/>
<g font-size="6.600" fill="#a0a8b0"><text x="0" y="470.500">KBMACD</text><text x="32" y="470.500">LW&amp;R</text><text x="59" y="470.500" fill="#e0e0e0">MACD</text><text x="85" y="470.500">BBI</text></g>
<path d="M28 463v10M55 463v10M81 463v10M98 463v10" stroke="#3a3f46" stroke-width=".6"/>
<text x="0" y="480.500" font-size="6.800" fill="#c8a070">,3)</text>
<text x="9" y="480.500" font-size="6.800" fill="#d89020" textLength="31" lengthAdjust="spacingAndGlyphs">K: +55.49↓</text>
<text x="42" y="480.500" font-size="6.800" fill="#20b8d8" textLength="31" lengthAdjust="spacingAndGlyphs">D: +60.75↓</text>
<text x="77" y="480.500" font-size="6.800" fill="#a860d8" textLength="30" lengthAdjust="spacingAndGlyphs">J: +44.07↓</text>
<rect x="600" y="474" width="37" height="9.500" fill="#000"/><text x="618.500" y="481.500" font-size="6.800" fill="#aaa" text-anchor="middle">优选参数</text>
<rect x="639" y="474" width="38" height="9.500" fill="#5a0c0c"/><text x="658" y="481.500" font-size="6.800" fill="#ddd" text-anchor="middle">自定义参数</text>
<rect x="677" y="474" width="36" height="9.500" fill="#1c2127"/><text x="695" y="481.500" font-size="7" fill="#a8a8a8" text-anchor="middle">指标说明</text>
<!-- KDJ -->
<g transform="translate(0 330) scale(.33333)" fill="none" stroke-width="2.200">
<polyline stroke="#a860d8" points="0,465 20,482 90,510"/><polyline stroke="#a860d8" points="400,510 430,472 460,490 480,497 510,510"/><polyline stroke="#a860d8" points="800,510 820,488 860,490 900,510"/><polyline stroke="#a860d8" points="1120,505 1140,495 1180,500 1200,510"/>
<polyline stroke="#d89020" points="0,480 60,490 130,505 170,510"/><polyline stroke="#d89020" points="410,510 440,503 490,510"/><polyline stroke="#d89020" points="810,510 850,503 900,508"/><polyline stroke="#d89020" points="1130,510 1160,503 1210,510"/>
<polyline stroke="#20b8d8" points="50,488 160,500 190,510"/><polyline stroke="#20b8d8" points="830,510 900,505 930,510"/>
</g>
<g transform="translate(420 330) scale(.33333)" fill="none" stroke-width="2.200">
<polyline stroke="#a860d8" points="10,510 30,487 60,495 85,475 130,490 180,495 205,490 230,505 250,510"/><polyline stroke="#a860d8" points="440,510 490,465 515,470 560,495 620,510"/><polyline stroke="#a860d8" points="640,505 660,495 690,497 720,510"/>
<polyline stroke="#d89020" points="10,510 40,500 100,488 180,495 250,505"/><polyline stroke="#d89020" points="460,510 510,490 570,500"/>
<polyline stroke="#20b8d8" points="130,495 220,500 270,510"/><polyline stroke="#20b8d8" points="520,500 580,498 620,510"/>
</g>
<!-- right panel -->
<rect x="743" y="39" width="95" height="461" fill="#12161c"/>
<rect x="745" y="44" width="3" height="5" fill="#d8a020"/>
<text x="753" y="50" font-size="11.700" fill="#20c8e0" style="font-family:'Liberation Serif','Noto Serif CJK SC',serif">省广集团</text>
<text x="805" y="50" font-size="11" fill="#20c8e0">002400</text>
<text x="774" y="67" font-size="12.500" fill="#12a83c" font-weight="bold" letter-spacing="1">7.78</text>
<text x="807" y="66.500" font-size="7.500" fill="#12a83c" font-weight="bold">-0.26</text><text x="828" y="66.500" font-size="7.500" fill="#12a83c" font-weight="bold">-3.</text>
<path d="M743 70.500H838M743 80.500H838M743 91H838M743 216.500H838M743 226.500H838M743 236.500H838M743 354.500H838M743 365H838" stroke="#2a2f36" stroke-width=".8"/>
<path d="M753 91V151M753 156V216" stroke="#2a2f36" stroke-width=".8"/>
<text class="k" x="743" y="79">委比</text><text x="818" y="78.500" class="g" style="font-weight:normal">-83.57%</text>
<text class="k" x="743" y="89">均卖价</text><text x="818" y="88.500" font-size="7.500" fill="#e02020" text-anchor="end" font-weight="bold">8.49</text><text class="k" x="819" y="89">总卖量</text>
<g class="q"><text x="754" y="99.500">6</text><text x="754" y="109.500">5</text><text x="754" y="119.500">4</text><text x="754" y="129.500">3</text><text x="754" y="139.500">2</text><text x="754" y="149.500">1</text><text x="754" y="162">1</text><text x="754" y="172.500">2</text><text x="754" y="182.500">3</text><text x="754" y="192.500">4</text><text x="754" y="202.500">5</text><text x="754" y="212.500">6</text></g>
<g class="k"><text x="743" y="116">卖</text><text x="743" y="135">盘</text><text x="743" y="179">买</text><text x="743" y="198">盘</text></g>
<g class="g"><text x="818" y="99.500">7.84</text><text x="818" y="109.500">7.83</text><text x="818" y="119.500">7.82</text><text x="818" y="129.500">7.81</text><text x="818" y="139.500">7.80</text><text x="818" y="149.500">7.79</text><text x="818" y="162">7.78</text><text x="818" y="172.500">7.77</text><text x="818" y="182.500">7.76</text><text x="818" y="192.500">7.75</text><text x="818" y="202.500">7.74</text><text x="818" y="212.500">7.73</text></g>
<rect x="743" y="152" width="91" height="2.500" fill="#a82222"/><rect x="835" y="152" width="3" height="2.500" fill="#1a8a38"/>
<g class="k">
<text x="743" y="224">均买价</text><text x="819" y="224">总买量</text>
<text x="743" y="234">总笔数</text><text x="819" y="234">均笔</text>
<text x="743" y="245">最新</text><text x="819" y="245">开盘</text>
<text x="743" y="255">涨跌</text><text x="819" y="255">最高</text>
<text x="743" y="265">涨幅</text><text x="819" y="265">最低</text>
<text x="743" y="275">振幅</text><text x="819" y="275">量比</text>
<text x="743" y="284">总手</text><text x="819" y="284">换手</text>
<text x="743" y="294">金额</text><text x="819" y="294">换手(实)</text>
<text x="743" y="304">涨停</text><text x="819" y="304">跌停</text>
<text x="743" y="313">外盘</text><text x="819" y="313">内盘</text>
<text x="743" y="323">总市值</text><text x="819" y="323">流通值</text>
<text x="743" y="333">总股本</text><text x="819" y="333">流通股</text>
<text x="743" y="343" textLength="33" lengthAdjust="spacingAndGlyphs">市盈(静)</text><text x="819" y="343">市盈</text>
<text x="743" y="352" textLength="39" lengthAdjust="spacingAndGlyphs">总市值(合)</text><text x="819" y="352">实体</text>
</g>
<text x="743" y="362.500" font-size="6.500" fill="#c8c8c8">文化传媒</text><text x="838" y="362.500" font-size="7.500" fill="#12a83c" text-anchor="end">-1.4</text>
<text x="818" y="223.700" class="g">7.70</text>
<text x="818" y="233.700" class="c">60019</text>
<text x="818" y="244.700" class="g">7.78</text>
<text x="818" y="254.700" class="g">-0.26</text>
<text x="818" y="264.700" class="g" style="font-weight:normal">-3.23%</text>
<text x="818" y="274.700" class="c">4.60%</text>
<text x="818" y="283.700" class="c">85.27万</text>
<text x="818" y="293.700" class="c">6.78亿</text>
<text x="818" y="303.700" font-size="7.500" fill="#e02020" text-anchor="end" font-weight="bold">8.84</text>
<text x="818" y="312.700" font-size="7.500" fill="#d81818" text-anchor="end" font-weight="bold">32.11万</text>
<text x="818" y="322.700" class="c">135.6亿</text>
<text x="818" y="332.700" class="c">17.43亿</text>
<text x="818" y="342.700" font-size="7.500" fill="#d8d8d8" text-anchor="end" font-weight="bold">134.4</text>
<text x="818" y="351.700" class="c">135.6亿</text>
<g font-size="7.700" fill="#d0d0d0" font-weight="bold"><text x="743" y="374">14:56</text><text x="743" y="387">14:56</text><text x="743" y="399">14:56</text><text x="743" y="412">14:56</text><text x="743" y="424">14:56</text><text x="743" y="437">14:56</text><text x="743" y="449">14:56</text><text x="743" y="462">14:56</text><text x="743" y="474">14:56</text><text x="743" y="487">14:56</text><text x="743" y="499">14:56</text></g>
<g class="g"><text x="818" y="374">7.78</text><text x="818" y="387">7.78</text><text x="818" y="399">7.79</text><text x="818" y="412">7.79</text><text x="818" y="424">7.79</text><text x="818" y="437">7.79</text><text x="818" y="449">7.79</text><text x="818" y="462">7.78</text><text x="818" y="474">7.79</text><text x="818" y="487">7.78</text><text x="818" y="499">7.79</text></g>
</svg>
</body></html>
